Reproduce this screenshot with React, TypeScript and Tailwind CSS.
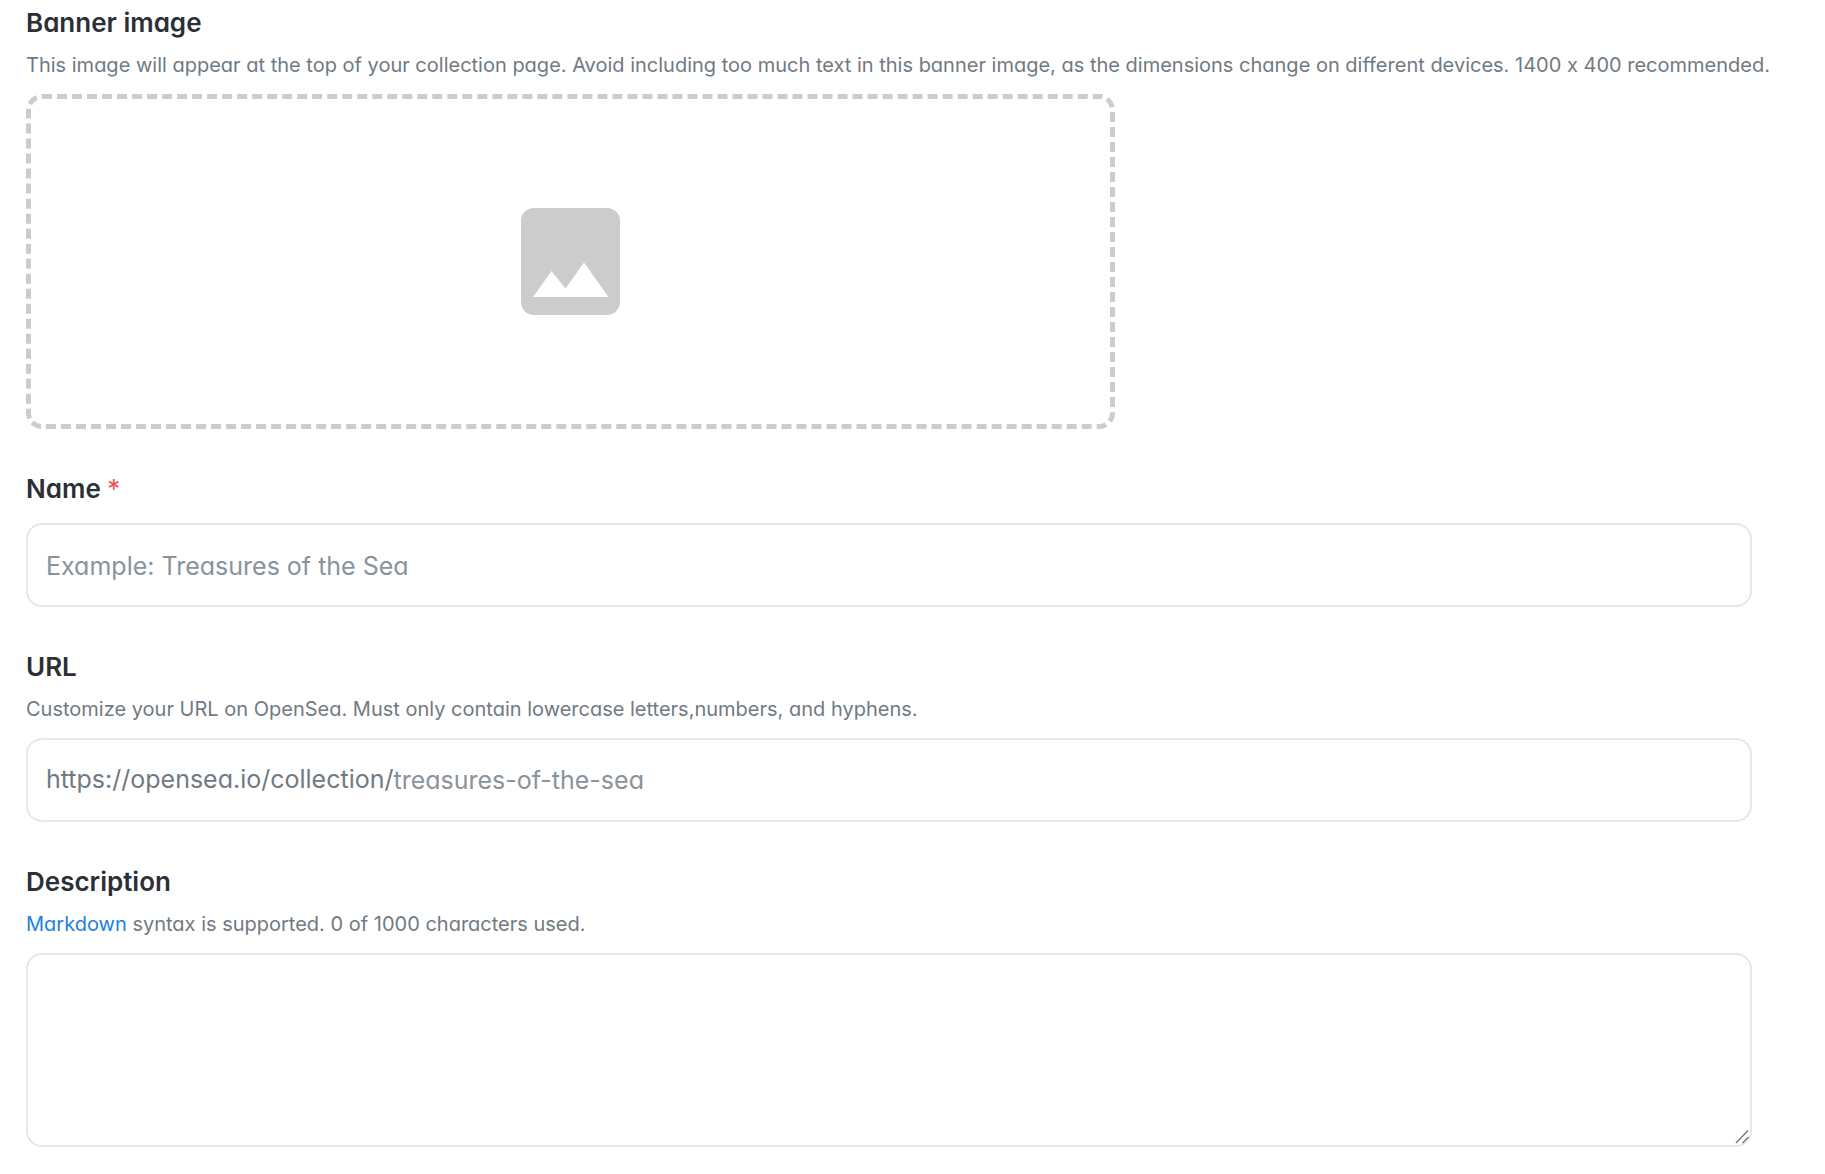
import { useState } from "react";

// placeholder picture shown in the empty drop area
const ImageIcon = () => (
  <svg viewBox="0 0 99 107" className="h-[107px] w-[99px]" aria-hidden="true">
    <path
      d="M13 0H86A13 13 0 0 1 99 13V94A13 13 0 0 1 86 107H13A13 13 0 0 1 0 94V13A13 13 0 0 1 13 0Z"
      fill="#ccc"
    />
    <path d="M12 89L30.5 63L44.5 80.5L63 54.5L87.5 89Z" fill="#fff" />
  </svg>
);

// two diagonal lines in the corner of the textarea
const ResizeGrip = () => (
  <svg
    viewBox="0 0 16 16"
    className="pointer-events-none absolute right-0.5 bottom-0.5 size-4"
    stroke="#808080"
    strokeWidth="1.6"
    aria-hidden="true"
  >
    <path d="M2 14L14 1.5M8.5 14L14.5 8" />
  </svg>
);

const Collection = () => {
  const [name, setName] = useState("");
  const [url, setUrl] = useState("");
  const [description, setDescription] = useState("");

  return (
    <form className="flex flex-col gap-[42px] bg-white pt-[5px] pb-[27px] pl-[26px] pr-[73px] font-['Inter',sans-serif] text-[#707a83] [font-feature-settings:'calt'_0,'cv11'_1]">
      {/* Banner */}
      <section>
        <h2 className="text-[26px] leading-9 font-semibold text-[#2b2f36]">
          Banner image
        </h2>
        <p className="mt-2.5 text-[20px] leading-7 whitespace-nowrap">
          This image will appear at the top of your collection page. Avoid
          including too much text in this banner image, as the dimensions change
          on different devices. 1400 x 400 recommended.
        </p>
        <label className="mt-[15px] flex h-[335px] w-full max-w-[1089px] cursor-pointer items-center justify-center rounded-2xl border-[5px] border-dashed border-[#ccc]">
          <input
            type="file"
            accept="image/*"
            aria-label="Banner image"
            className="sr-only"
          />
          <ImageIcon />
        </label>
      </section>

      {/* Name */}
      <section>
        <label
          htmlFor="name"
          className="block text-[26px] leading-9 font-semibold text-[#2b2f36]"
        >
          Name <span className="font-normal text-[#eb5757]">*</span>
        </label>
        <input
          id="name"
          type="text"
          required
          value={name}
          onChange={(e) => setName(e.target.value)}
          placeholder="Example: Treasures of the Sea"
          className="mt-4 block h-[84px] w-full rounded-2xl border-2 border-[#e5e8eb] px-[18px] pt-0.5 text-[25px] outline-none placeholder:text-[#8a939b]"
        />
      </section>

      {/* URL */}
      <section>
        <label
          htmlFor="url"
          className="block text-[26px] leading-9 font-semibold text-[#2b2f36]"
        >
          URL
        </label>
        <p className="mt-2.5 text-[20px] leading-7">
          Customize your URL on OpenSea. Must only contain lowercase
          letters,numbers, and hyphens.
        </p>
        <div className="mt-[15px] flex h-[84px] items-center rounded-2xl border-2 border-[#e5e8eb] px-[18px] text-[25px]">
          <span>https://opensea.io/collection/</span>
          <input
            id="url"
            type="text"
            value={url}
            onChange={(e) => setUrl(e.target.value)}
            placeholder="treasures-of-the-sea"
            className="min-w-0 flex-1 pt-0.5 outline-none placeholder:text-[#8a939b]"
          />
        </div>
      </section>

      {/* Description */}
      <section>
        <label
          htmlFor="description"
          className="block text-[26px] leading-9 font-semibold text-[#2b2f36]"
        >
          Description
        </label>
        <p className="mt-2.5 text-[20px] leading-7">
          <a href="#markdown" className="text-[#2081e2]">
            Markdown
          </a>{" "}
          syntax is supported. {description.length} of 1000 characters used.
        </p>
        <div className="relative mt-[15px]">
          <textarea
            id="description"
            maxLength={1000}
            value={description}
            onChange={(e) => setDescription(e.target.value)}
            className="block h-[194px] w-full resize-y rounded-2xl border-2 border-[#e5e8eb] p-[18px] text-[25px] outline-none [&::-webkit-resizer]:bg-transparent"
          />
          <ResizeGrip />
        </div>
      </section>
    </form>
  );
};

export default Collection;
